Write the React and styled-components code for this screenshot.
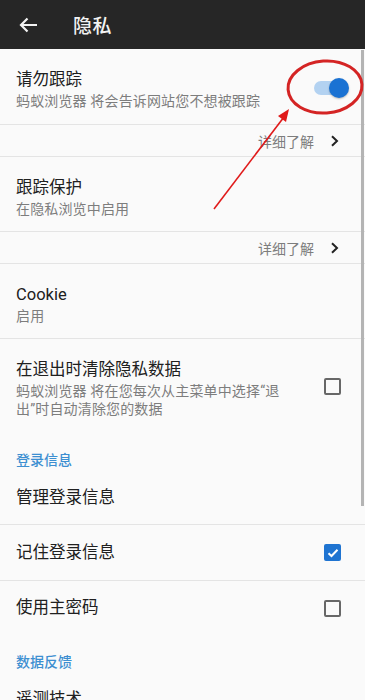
import React from "react";
import styled, { createGlobalStyle } from "styled-components";

const Global = createGlobalStyle`
  html, body { margin: 0; padding: 0; background: #fafafa; }
  body { font-family: Roboto, "Noto Sans CJK SC", "Noto Sans", sans-serif; -webkit-font-smoothing: antialiased; }
  * { box-sizing: border-box; }
`;

const Page = styled.div`
  position: relative;
  width: 365px;
  height: 700px;
  overflow: hidden;
  background: #fafafa;
`;

const Toolbar = styled.header`
  height: 49px;
  background: #262626;
  display: flex;
  align-items: center;
  padding-left: 19px;
  color: #f2f2f2;
`;

const BackIcon = styled.svg`
  width: 19px;
  height: 16px;
  flex: none;
`;

const Title = styled.h1`
  margin: 0 0 0 35px;
  font-size: 19px;
  font-weight: 500;
  letter-spacing: 0.5px;
  color: #f2f2f2;
`;

const List = styled.main`
  display: flex;
  flex-direction: column;
`;

const Row = styled.div`
  display: flex;
  align-items: center;
  min-height: ${(p) => p.$h || 56}px;
  padding: ${(p) => p.$pt || 0}px 24px ${(p) => p.$pb || 0}px 16px;
  border-bottom: ${(p) => (p.$divider ? "1px solid #e4e4e4" : "none")};
`;

const Texts = styled.div`
  flex: 1;
  display: flex;
  flex-direction: column;
  min-width: 0;
`;

const RowTitle = styled.div`
  font-size: 16.5px;
  line-height: 22px;
  color: #202020;
`;

const RowSub = styled.div`
  font-size: 14px;
  letter-spacing: 0.15px;
  line-height: 18px;
  color: #7d7d7d;
  max-width: 272px;
  margin-top: 1px;
`;

const LinkRow = styled.div`
  height: 32px;
  display: flex;
  align-items: center;
  justify-content: flex-end;
  padding-right: 26px;
  border-bottom: 1px solid #e4e4e4;
  font-size: 14px;
  color: #7d7d7d;
  gap: 16px;
`;

const Chevron = styled.svg`
  width: 9px;
  height: 12px;
`;

const SectionHeader = styled.div`
  padding: ${(p) => p.$top}px 16px 2px;
  font-size: 14px;
  line-height: 20px;
  font-weight: 500;
  color: #3d8fd1;
`;

const Box = styled.div`
  width: 17px;
  height: 17px;
  flex: none;
  border-radius: 2px;
  border: 2px solid ${(p) => (p.$checked ? "#1f74d1" : "#676767")};
  background: ${(p) => (p.$checked ? "#1f74d1" : "transparent")};
  display: flex;
  align-items: center;
  justify-content: center;
  margin-top: ${(p) => p.$shift || 0}px;
`;

const SwitchTrack = styled.div`
  position: relative;
  width: 30px;
  height: 14px;
  border-radius: 7px;
  background: #b3d2f1;
  flex: none;
  margin-right: -3px;
  margin-top: -3px;
`;

const SwitchThumb = styled.div`
  position: absolute;
  right: -5px;
  top: -3px;
  width: 20px;
  height: 20px;
  border-radius: 50%;
  background: #1a72d3;
  box-shadow: 0 1px 2px rgba(0, 0, 0, 0.25);
`;

const Scrollbar = styled.div`
  position: absolute;
  right: 1px;
  top: 50px;
  width: 3px;
  height: 456px;
  background: #b4b4b4;
`;

const Overlay = styled.svg`
  position: absolute;
  left: 0;
  top: 0;
  width: 365px;
  height: 700px;
  pointer-events: none;
`;

const Check = ({ checked, shift }) => (
  <Box $checked={checked} $shift={shift}>
    {checked && (
      <svg width="12" height="10" viewBox="0 0 12 10">
        <path d="M1.5 5.2 L4.5 8 L10.5 1.8" fill="none" stroke="#fff" strokeWidth="2" />
      </svg>
    )}
  </Box>
);

const More = () => (
  <LinkRow>
    <span>详细了解</span>
    <Chevron viewBox="0 0 9 12">
      <path d="M2 1.2 L7 6 L2 10.8" fill="none" stroke="#222" strokeWidth="2" />
    </Chevron>
  </LinkRow>
);

export default function App() {
  return (
    <Page>
      <Global />
      <Toolbar>
        <BackIcon viewBox="0 0 19 16">
          <path d="M18 8 H2 M8.5 1.5 L2 8 L8.5 14.5" fill="none" stroke="#f2f2f2" strokeWidth="2.2" />
        </BackIcon>
        <Title>隐私</Title>
      </Toolbar>
      <List>
        <Row $h={76} $pt={6} $divider>
          <Texts>
            <RowTitle>请勿跟踪</RowTitle>
            <RowSub>蚂蚁浏览器 将会告诉网站您不想被跟踪</RowSub>
          </Texts>
          <SwitchTrack>
            <SwitchThumb />
          </SwitchTrack>
        </Row>
        <More />
        <Row $h={75} $pt={6} $divider>
          <Texts>
            <RowTitle>跟踪保护</RowTitle>
            <RowSub>在隐私浏览中启用</RowSub>
          </Texts>
        </Row>
        <More />
        <Row $h={75} $pt={6} $divider>
          <Texts>
            <RowTitle>Cookie</RowTitle>
            <RowSub>启用</RowSub>
          </Texts>
        </Row>
        <Row $h={91} $pt={20} $pb={14}>
          <Texts>
            <RowTitle>在退出时清除隐私数据</RowTitle>
            <RowSub>蚂蚁浏览器 将在您每次从主菜单中选择“退出”时自动清除您的数据</RowSub>
          </Texts>
          <Check shift={-5} />
        </Row>
        <SectionHeader $top={18}>登录信息</SectionHeader>
        <Row $h={53} $divider>
          <Texts>
            <RowTitle>管理登录信息</RowTitle>
          </Texts>
        </Row>
        <Row $h={56} $divider>
          <Texts>
            <RowTitle>记住登录信息</RowTitle>
          </Texts>
          <Check checked />
        </Row>
        <Row $h={54}>
          <Texts>
            <RowTitle>使用主密码</RowTitle>
          </Texts>
          <Check />
        </Row>
        <SectionHeader $top={17}>数据反馈</SectionHeader>
        <Row $h={52}>
          <Texts>
            <RowTitle>遥测技术</RowTitle>
          </Texts>
        </Row>
      </List>
      <Scrollbar />
      <Overlay viewBox="0 0 365 700">
        <ellipse cx="325" cy="87" rx="37" ry="26" fill="none" stroke="#d42424" strokeWidth="3" transform="rotate(-4 325 87)" />
        <line x1="214" y1="209" x2="284" y2="117" stroke="#e01a1a" strokeWidth="1.6" />
        <polygon points="289,109 278,116 286,122" fill="#e01a1a" />
      </Overlay>
    </Page>
  );
}
